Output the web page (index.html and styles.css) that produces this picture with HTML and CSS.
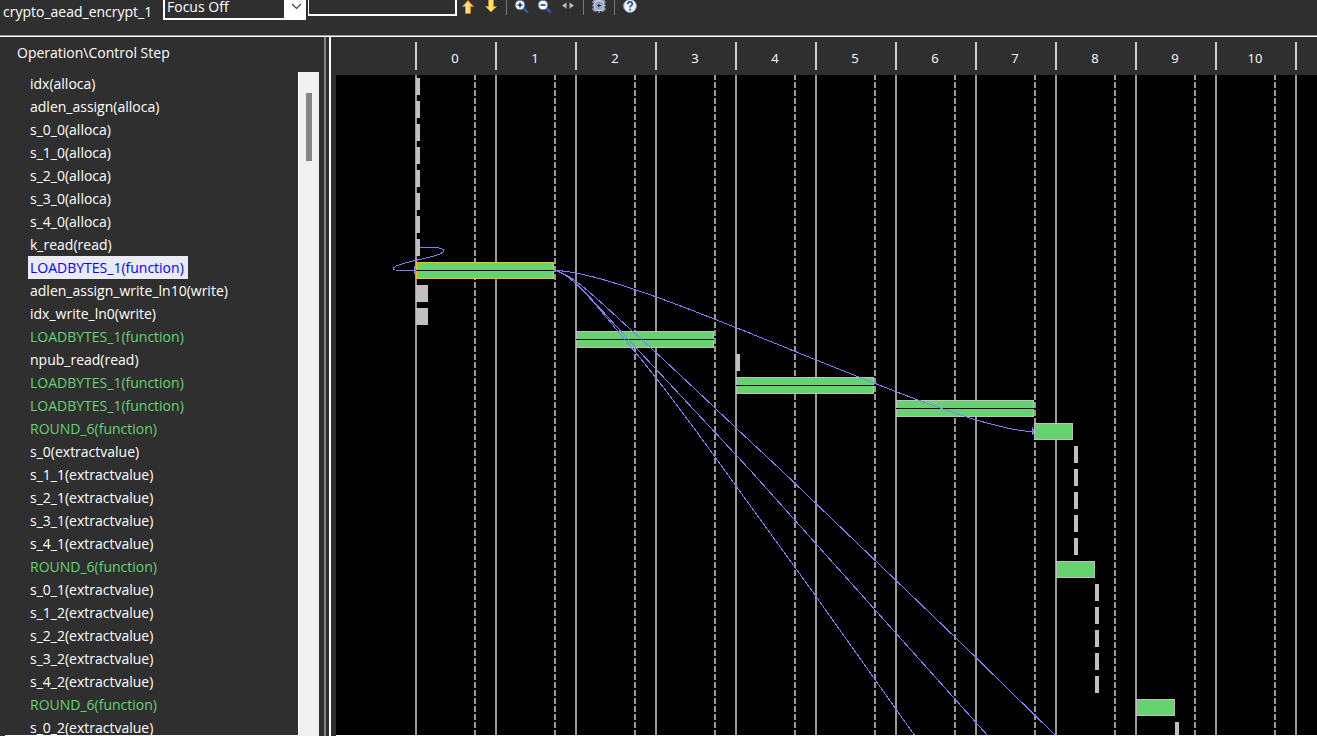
FILE: index.html
```html
<!DOCTYPE html>
<html lang="en">
<head>
<meta charset="utf-8">
<title>Schedule Viewer</title>
<link rel="stylesheet" href="styles.css">
</head>
<body>
<div class="app">
  <header class="toolbar">
    <span class="module">crypto_aead_encrypt_1</span>
    <div class="combo">
      <select class="combo-select" aria-label="Focus"><option>Focus Off</option></select>
      <svg class="combo-arrow" width="22" height="19" viewBox="0 0 22 19"><rect width="22" height="19" fill="#fff"/><path d="M8 4l4.500 4.500l4.500-4.500" fill="none" stroke="#444" stroke-width="1.200"/></svg>
    </div>
    <input class="search" type="text" aria-label="Search">
    <div class="tools">
      <button class="tool" aria-label="Previous"><svg width="16" height="16" viewBox="0 0 16 16"><path d="M8 .5L13.500 6.500H10.500V13.500H5.500V6.500H2.500z" fill="#ffd866" stroke="#c98a14"/><path d="M8 2L6.500 5.500V12.500" fill="none" stroke="#fff3b8"/></svg></button>
      <button class="tool" aria-label="Next"><svg width="16" height="16" viewBox="0 0 16 16"><path d="M8 12L13.500 6.500H10.500V-1H5.500V6.500H2.500z" fill="#ffd866" stroke="#c98a14"/><path d="M6.800 0V7.500L8 10" fill="none" stroke="#fff3b8"/></svg></button>
      <span class="sep"></span>
      <button class="tool" aria-label="Zoom in"><svg width="16" height="16" viewBox="0 0 16 16"><path d="M8.500 7.500L14 12.500" stroke="#2d5a9e" stroke-width="2.500"/><circle cx="6" cy="5" r="4.800" fill="#fff" stroke="#4a72ac"/><path d="M3.500 5h5M6 2.500v5" stroke="#223a6c" stroke-width="1.600"/></svg></button>
      <button class="tool" aria-label="Zoom out"><svg width="16" height="16" viewBox="0 0 16 16"><path d="M8.500 7.500L14 12.500" stroke="#2d5a9e" stroke-width="2.500"/><circle cx="6" cy="5" r="4.800" fill="#fff" stroke="#4a72ac"/><path d="M3.500 5h5" stroke="#223a6c" stroke-width="1.600"/></svg></button>
      <button class="tool" aria-label="Fit width"><svg width="16" height="16" viewBox="0 0 16 16"><path d="M6.500 2.500v6L2 5.500zM9.500 2.500v6L14 5.500z" fill="#c8c4c4" stroke="#77706f" stroke-width=".6"/></svg></button>
      <span class="sep"></span>
      <button class="tool" aria-label="Settings"><svg width="16" height="16" viewBox="0 0 16 16"><path d="M4.500-1v13M8-1v14M11.500-1v13M1 2h14M1 5.500h14M1 9h14M2.500 0l11 11M13.500 0l-11 11" stroke="#8093b5" stroke-width="1.600"/><rect x="3" y=".5" width="10" height="10" rx="3" fill="#a9b7cf" stroke="#c3cede"/><circle cx="8" cy="5.500" r="3" fill="#d7dfeb" stroke="#69788f" stroke-width=".8"/><path d="M6 5.500h4M8 3.500v4" stroke="#26324a" stroke-width="1.300"/></svg></button>
      <span class="sep"></span>
      <button class="tool" aria-label="Help"><svg width="16" height="16" viewBox="0 0 16 16"><circle cx="8" cy="6" r="6.300" fill="#eef4fa" stroke="#a2b7cd"/><path d="M5.800 4.300C5.800 1.200 10.300 1.200 10.300 4.100C10.300 5.700 8 5.700 8 7.600M8 8.800v1.800" fill="none" stroke="#304f79" stroke-width="1.700"/></svg></button>
    </div>
  </header>
  <main class="panes">
    <section class="side">
      <h1 class="side-title">Operation\Control Step</h1>
      <div class="side-body">
        <ul class="ops">
          <li>idx(alloca)</li>
          <li>adlen_assign(alloca)</li>
          <li>s_0_0(alloca)</li>
          <li>s_1_0(alloca)</li>
          <li>s_2_0(alloca)</li>
          <li>s_3_0(alloca)</li>
          <li>s_4_0(alloca)</li>
          <li>k_read(read)</li>
          <li class="selected">LOADBYTES_1(function)</li>
          <li>adlen_assign_write_ln10(write)</li>
          <li>idx_write_ln0(write)</li>
          <li class="fn">LOADBYTES_1(function)</li>
          <li>npub_read(read)</li>
          <li class="fn">LOADBYTES_1(function)</li>
          <li class="fn">LOADBYTES_1(function)</li>
          <li class="fn">ROUND_6(function)</li>
          <li>s_0(extractvalue)</li>
          <li>s_1_1(extractvalue)</li>
          <li>s_2_1(extractvalue)</li>
          <li>s_3_1(extractvalue)</li>
          <li>s_4_1(extractvalue)</li>
          <li class="fn">ROUND_6(function)</li>
          <li>s_0_1(extractvalue)</li>
          <li>s_1_2(extractvalue)</li>
          <li>s_2_2(extractvalue)</li>
          <li>s_3_2(extractvalue)</li>
          <li>s_4_2(extractvalue)</li>
          <li class="fn">ROUND_6(function)</li>
          <li>s_0_2(extractvalue)</li>
        </ul>
        <div class="scrollbar"><div class="thumb"></div></div>
      </div>
    </section>
    <div class="sash"></div>
    <section class="chart">
      <div class="steps">
        <span>0</span><span>1</span><span>2</span><span>3</span><span>4</span><span>5</span><span>6</span><span>7</span><span>8</span><span>9</span><span>10</span><span></span>
      </div>
      <div class="canvas">
        <svg class="gantt" viewBox="336 75 1200 900" width="1200" height="900" shape-rendering="crispEdges">
          <defs>
            <pattern id="grid" x="415" y="74" width="80" height="8" patternUnits="userSpaceOnUse">
              <rect width="2" height="8" fill="#999"/>
              <rect x="59" width="2" height="6" fill="#999"/>
            </pattern>
          </defs>
          <rect x="415" y="75" width="1121" height="900" fill="url(#grid)"/>
          <g class="op">
            <path d="M416 78h4v17h-4zM416 101h4v17h-4zM416 124h4v17h-4zM416 147h4v17h-4zM416 170h4v17h-4zM416 193h4v17h-4zM416 216h4v17h-4zM416 239h4v17h-4z"/>
            <path d="M416 285h12v17h-12zM416 308h12v17h-12zM736 354h4v17h-4z"/>
            <path d="M1074 446h4v17h-4zM1074 469h4v17h-4zM1074 492h4v17h-4zM1074 515h4v17h-4zM1074 538h4v17h-4z"/>
            <path d="M1095 584h4v17h-4zM1095 607h4v17h-4zM1095 630h4v17h-4zM1095 653h4v17h-4zM1095 676h4v17h-4zM1175 722h4v17h-4z"/>
          </g>
          <g class="call">
            <rect class="active" x="416.500" y="262.500" width="137" height="16"/>
            <rect x="576.500" y="331.500" width="137" height="16"/>
            <rect x="736.500" y="377.500" width="137" height="16"/>
            <rect x="896.500" y="400.500" width="137" height="16"/>
            <rect x="1034.500" y="423.500" width="38" height="16"/>
            <rect x="1056.500" y="561.500" width="38" height="16"/>
            <rect x="1136.500" y="699.500" width="38" height="16"/>
          </g>
          <path d="M416 270h138v1h-138zM576 339h138v1h-138zM736 385h138v1h-138zM896 408h138v1h-138z"/>
          <g class="dep">
            <path d="M420 247.500H436C449 249 444 254 430 257L405 263C388 268 392 270.500 402 270.500H416M414.500 266v8M415.500 268v5"/>
            <path d="M554 270.500C638 270.500 950 431.500 1034 431.500M1032.500 427v8M1033.500 429v5"/>
            <path d="M554 270.500C572 272 605 307 640 338C670 365 715 408 736 428L781 470L958 640L1056 736"/>
            <path d="M554 270.500C572 272 600 310 640 352C670 384 720 438 750 470L902 640L988 736"/>
            <path d="M554 270.500C572 272 600 310 640 358C670 394 700 436 736 486L815 595L915 736"/>
          </g>
        </svg>
      </div>
    </section>
  </main>
</div>
</body>
</html>
```
FILE: styles.css
```css
* { box-sizing: border-box; }
body {
  margin: 0;
  background: #2f2f2f;
  color: #fff;
  font: 14px/23px "Open Sans", "Noto Sans", sans-serif;
}
.app {
  display: flex;
  flex-direction: column;
  height: 100vh;
  overflow: hidden;
}
.toolbar {
  display: flex;
  flex: none;
  align-items: flex-start;
  height: 37px;
  padding-left: 3px;
  border-bottom: 1px solid #fff;
  box-shadow: inset 0 -1px #a0a0a0;
}
.module { width: 160px; white-space: nowrap; }
.combo {
  display: flex;
  width: 143px;
  height: 20px;
  border: 2px solid #fff;
  border-width: 0 0 2px 2px;
  margin-right: 2px;
}
.combo-select {
  flex: 1;
  min-width: 0;
  height: 18px;
  padding: 0 0 4px 2px;
  border: 0;
  appearance: none;
  background: #2f2f2f;
  color: #fff;
  font: inherit;
  line-height: 14px;
}
.combo-arrow { flex: none; }
.search {
  width: 149px;
  height: 16px;
  padding: 0 4px;
  border: 1px solid #fff;
  border-width: 0 2px 2px 1px;
  background: #2f2f2f;
  color: #fff;
  font: inherit;
}
.tools { display: flex; margin-left: 3px; }
.tool {
  width: 23px;
  height: 16px;
  padding: 0;
  border: 0;
  background: none;
}
.tool svg { display: block; }
.sep { width: 1px; height: 15px; margin-right: 7px; background: #777; }
.panes { display: flex; flex: 1; min-height: 0; }
.side { display: flex; flex-direction: column; width: 319px; flex: none; }
.side-title {
  flex: none;
  height: 35px;
  margin: 0;
  padding: 4px 17px;
  font-size: 14px;
  font-weight: 400;
}
.side-body { display: flex; flex: 1; min-height: 0; }
.ops {
  flex: 1;
  margin: 0 0 0 5px;
  padding: 0 0 0 23px;
  border-bottom: 1px solid #fff;
  overflow: hidden;
  list-style: none;
}
.ops li { width: max-content; padding: 0 2px; white-space: nowrap; }
.ops .fn { color: #64d472; }
.ops .selected { padding-right: 4px; background: #ebebf8; color: #00f; }
.scrollbar {
  width: 21px;
  padding: 21px 7px 0;
  border-left: 1px solid #fff;
  background: #f0f0f0;
}
.thumb { height: 68px; background: #858585; }
.sash {
  flex: none;
  width: 7px;
  margin-left: 5px;
  border-left: 2px solid #858585;
  border-right: 2px solid #fff;
}
.chart { display: flex; flex: 1; flex-direction: column; min-width: 0; padding-left: 5px; }
.steps {
  display: flex;
  flex: none;
  height: 38px;
  padding: 5px 0 5px 79px;
  overflow: hidden;
  font-size: 13px;
  line-height: 32px;
  text-align: center;
}
.steps span {
  flex: none;
  width: 80px;
  height: 28px;
  padding-right: 2px;
  border-left: 2px solid #ccc;
}
.canvas {
  flex: 1;
  min-height: 0;
  overflow: hidden;
  border-bottom: 1px solid #fff;
  background: #000;
}
.gantt { display: block; }
.op { fill: #c0c0c0; }
.call { fill: #66d371; stroke: #c0c0c0; }
.call .active { stroke: #ffc000; }
.dep { fill: none; stroke: #8080ff; }
```
